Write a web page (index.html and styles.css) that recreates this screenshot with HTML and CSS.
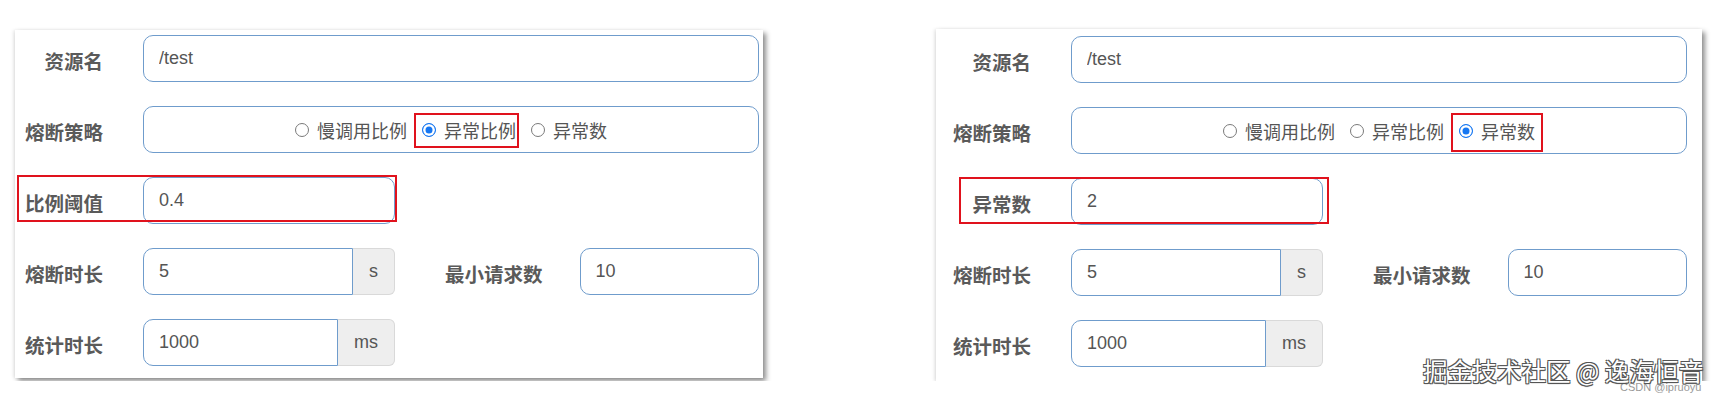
FILE: index.html
```html
<!DOCTYPE html>
<html lang="zh-CN">
<head>
    <meta charset="UTF-8">
    <meta name="viewport" content="width=device-width, initial-scale=1.0">
    <title>熔断规则</title>
    <link rel="stylesheet" href="styles.css">
</head>
<body>

<div class="page">
    <div class="panel panel-ratio">
        <div class="row">
            <label class="label">资源名</label>
            <input class="field" type="text" value="/test">
        </div>
        <div class="row">
            <label class="label">熔断策略</label>
            <div class="field radios">
                <label class="option"><input type="radio" name="grade-a"> 慢调用比例</label>
                <label class="option marked"><input type="radio" name="grade-a" checked> 异常比例</label>
                <label class="option"><input type="radio" name="grade-a"> 异常数</label>
            </div>
        </div>
        <div class="row marked-row">
            <label class="label">比例阈值</label>
            <input class="field short" type="text" value="0.4">
        </div>
        <div class="row">
            <label class="label">熔断时长</label>
            <div class="group">
                <input class="field" type="text" value="5">
                <span class="addon">s</span>
            </div>
            <label class="label label-wide">最小请求数</label>
            <input class="field" type="text" value="10">
        </div>
        <div class="row">
            <label class="label">统计时长</label>
            <div class="group">
                <input class="field" type="text" value="1000">
                <span class="addon">ms</span>
            </div>
        </div>
    </div>

    <div class="panel panel-count">
        <div class="row">
            <label class="label">资源名</label>
            <input class="field" type="text" value="/test">
        </div>
        <div class="row">
            <label class="label">熔断策略</label>
            <div class="field radios">
                <label class="option"><input type="radio" name="grade-b"> 慢调用比例</label>
                <label class="option"><input type="radio" name="grade-b"> 异常比例</label>
                <label class="option marked"><input type="radio" name="grade-b" checked> 异常数</label>
            </div>
        </div>
        <div class="row marked-row">
            <label class="label">异常数</label>
            <input class="field short" type="text" value="2">
        </div>
        <div class="row">
            <label class="label">熔断时长</label>
            <div class="group">
                <input class="field" type="text" value="5">
                <span class="addon">s</span>
            </div>
            <label class="label label-wide">最小请求数</label>
            <input class="field" type="text" value="10">
        </div>
        <div class="row">
            <label class="label">统计时长</label>
            <div class="group">
                <input class="field" type="text" value="1000">
                <span class="addon">ms</span>
            </div>
        </div>
    </div>
</div>

<div class="source">CSDN @ipruoyu</div>
<div class="watermark">掘金技术社区 @ 逸海恒音</div>

</body>
</html>
```

FILE: styles.css
```css
body {
    margin: 0;
    background-color: #fff;
    font-family: "Liberation Sans", "Noto Sans CJK SC", sans-serif;
    color: #555;
}

.page {
    display: flex;
    align-items: flex-start;
    padding-top: 29px;
}

.panel {
    display: flex;
    flex-direction: column;
    gap: 24px;
    background-color: #fff;
    box-shadow: 3px 3px 5px rgba(0, 0, 0, 0.45), -2px 0 3px rgba(0, 0, 0, 0.08);
}

.panel-ratio {
    width: 748px;
    margin: 1px 0 0 15px;
    padding: 5px 4px 12px 8px;
    box-sizing: border-box;
}

.panel-count {
    width: 766px;
    margin-left: 173px;
    padding: 7px 15px 14px 15px;
    box-sizing: border-box;
}

.row {
    display: flex;
    align-items: center;
    height: 47px;
    position: relative;
}

.label {
    width: 80px;
    margin: 4px 40px 0 0;
    flex-shrink: 0;
    text-align: right;
    white-space: nowrap;
    font-family: "Noto Sans CJK SC", sans-serif;
    font-weight: 700;
    font-size: 19.5px;
    line-height: 24px;
    color: #5a5a5a;
}

.label-wide {
    width: auto;
    margin: 4px 37px 0 50px;
}

.field {
    flex: 1;
    min-width: 0;
    height: 47px;
    box-sizing: border-box;
    margin: 0;
    padding: 0 15px;
    border: 1px solid #6f9ccc;
    border-radius: 10px;
    background-color: #fff;
    font-family: "Liberation Sans", sans-serif;
    font-size: 18px;
    color: #555;
    outline: none;
}

.field.short {
    flex: none;
    width: 252px;
}

.group {
    display: flex;
    width: 252px;
    flex-shrink: 0;
}

.group .field {
    border-radius: 10px 0 0 10px;
}

.addon {
    display: flex;
    align-items: center;
    padding: 0 16px;
    height: 47px;
    box-sizing: border-box;
    background-color: #eee;
    border: 1px solid #d9d9d9;
    border-left: none;
    border-radius: 0 6px 6px 0;
    font-size: 18px;
    color: #555;
}

.radios {
    display: flex;
    justify-content: center;
    align-items: center;
    gap: 15px;
}

.option {
    position: relative;
    display: flex;
    align-items: center;
    gap: 8px;
    font-family: "Noto Sans CJK SC", sans-serif;
    font-size: 18px;
    line-height: 24px;
    color: #555;
    white-space: nowrap;
}

.option input {
    appearance: none;
    -webkit-appearance: none;
    width: 14px;
    height: 14px;
    margin: 0;
    border: 1px solid #7a7a7a;
    border-radius: 50%;
    background-color: #fff;
}

.option input:checked {
    border: 1.5px solid #1677f2;
    background-color: #1677f2;
    box-shadow: inset 0 0 0 2.5px #fff;
}

.option.marked::after,
.marked-row::after {
    content: "";
    position: absolute;
    border: 2px solid #e0121d;
    pointer-events: none;
}

.panel-ratio .option.marked::after {
    left: -8px;
    right: -3px;
    top: -5px;
    bottom: -6px;
}

.panel-count .option.marked::after {
    left: -8px;
    right: -8px;
    top: -6px;
    bottom: -9px;
}

.panel-ratio .marked-row::after {
    left: -6px;
    top: -2px;
    width: 376px;
    height: 43px;
}

.panel-count .marked-row::after {
    left: 8px;
    top: -1px;
    width: 366px;
    height: 43px;
}

.source {
    position: absolute;
    left: 1620px;
    top: 381px;
    font-size: 11px;
    color: #999;
}

.watermark {
    position: absolute;
    left: 1423px;
    top: 355px;
    font-family: "Noto Sans CJK SC", sans-serif;
    font-size: 24.6px;
    line-height: 30px;
    color: #fff;
    white-space: nowrap;
    text-shadow: 1px 1px 0 #555, -1px -1px 0 #555, 1px -1px 0 #555, -1px 1px 0 #555, 0 1px 1px #333;
}
```
